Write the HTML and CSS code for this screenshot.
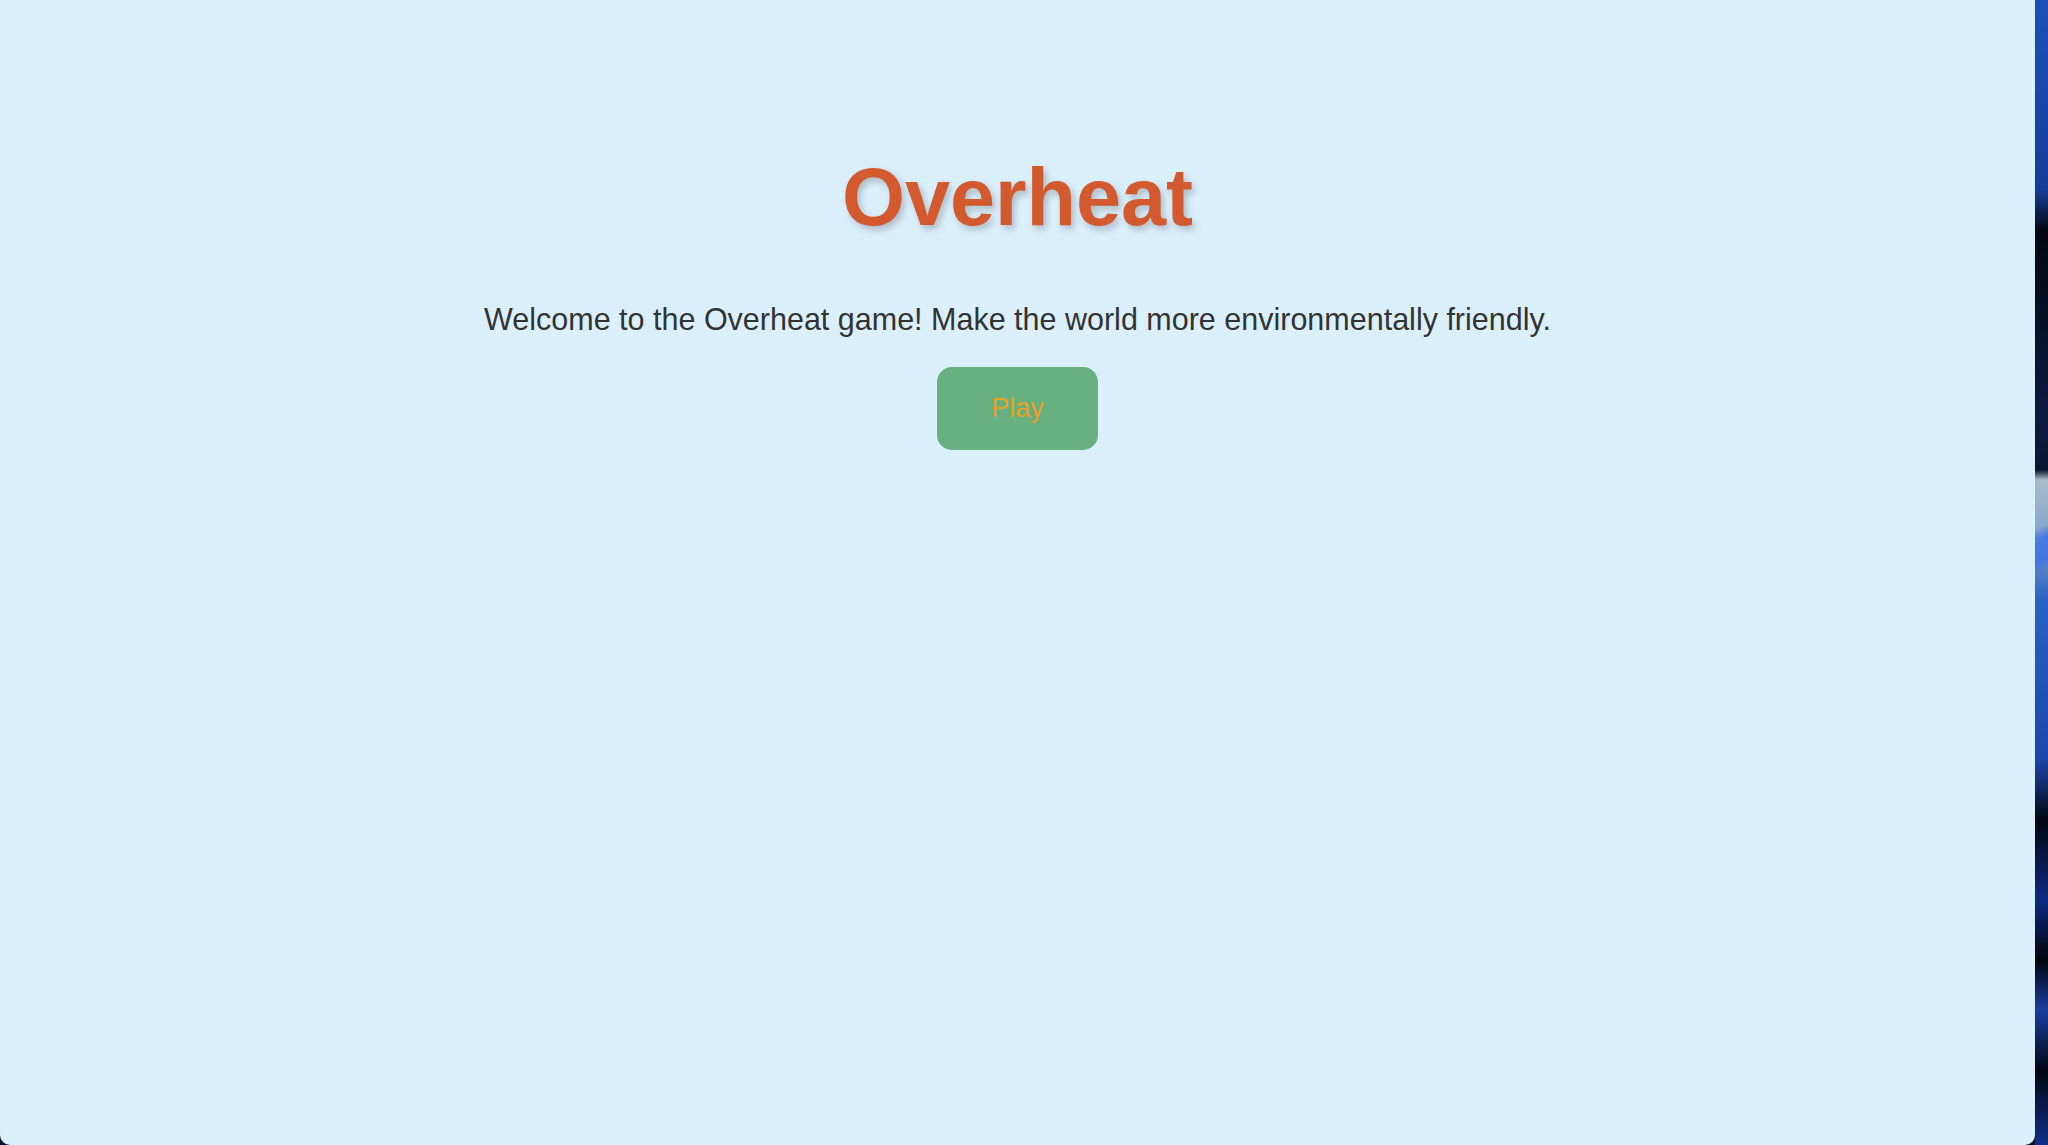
FILE: index.html
```html
<!DOCTYPE html>
<html lang="en">
<head>
<meta charset="utf-8">
<title>Overheat</title>
<link rel="stylesheet" href="styles.css">
</head>
<body>
<div class="screen">
  <main class="window">
    <h1 class="title">Overheat</h1>
    <p class="intro">Welcome to the Overheat game! Make the world more environmentally friendly.</p>
    <button class="play">Play</button>
  </main>
  <div class="wallpaper"></div>
</div>
</body>
</html>
```
FILE: styles.css
```css
html, body {
  margin: 0;
  padding: 0;
  height: 100%;
}
body {
  background: #05122e;
  font-family: "Liberation Sans", Arial, sans-serif;
  overflow: hidden;
}
.screen {
  display: flex;
  height: 1145px;
  width: 2048px;
}
.window {
  flex: 0 0 2035px;
  background: #dbf0fd;
  border-radius: 0 0 10px 10px;
  display: flex;
  flex-direction: column;
  align-items: center;
  padding-top: 151px;
  box-sizing: border-box;
}
.title {
  margin: 0;
  font-size: 81px;
  font-weight: bold;
  color: #d35a2e;
  text-shadow: 3px 4px 7px rgba(0, 0, 0, 0.22);
  line-height: 93px;
}
.intro {
  margin: 57px 0 0;
  font-size: 30.5px;
  line-height: 36px;
  color: #333333;
}
.play {
  margin-top: 30px;
  width: 161px;
  height: 83px;
  border: none;
  border-radius: 15px;
  background: #66b17f;
  color: #eaa124;
  font-family: "Liberation Sans", Arial, sans-serif;
  font-size: 27px;
  padding: 0;
  cursor: pointer;
}
.wallpaper {
  flex: 1;
  background:
    linear-gradient(160deg, transparent 0 46%, rgba(60, 110, 230, 0.8) 47% 49%, transparent 50%),
    linear-gradient(180deg,
      #1d4fb8 0px, #153e9a 190px, #030712 230px, #0a1a40 420px, #0b1530 470px,
      #a8bccd 480px, #7ea3c9 540px, #2a60c4 600px, #1a46a8 760px, #020610 820px,
      #0c2a80 900px, #01040c 960px, #183f9e 1010px, #020512 1070px, #102f86 1145px);
}
```
